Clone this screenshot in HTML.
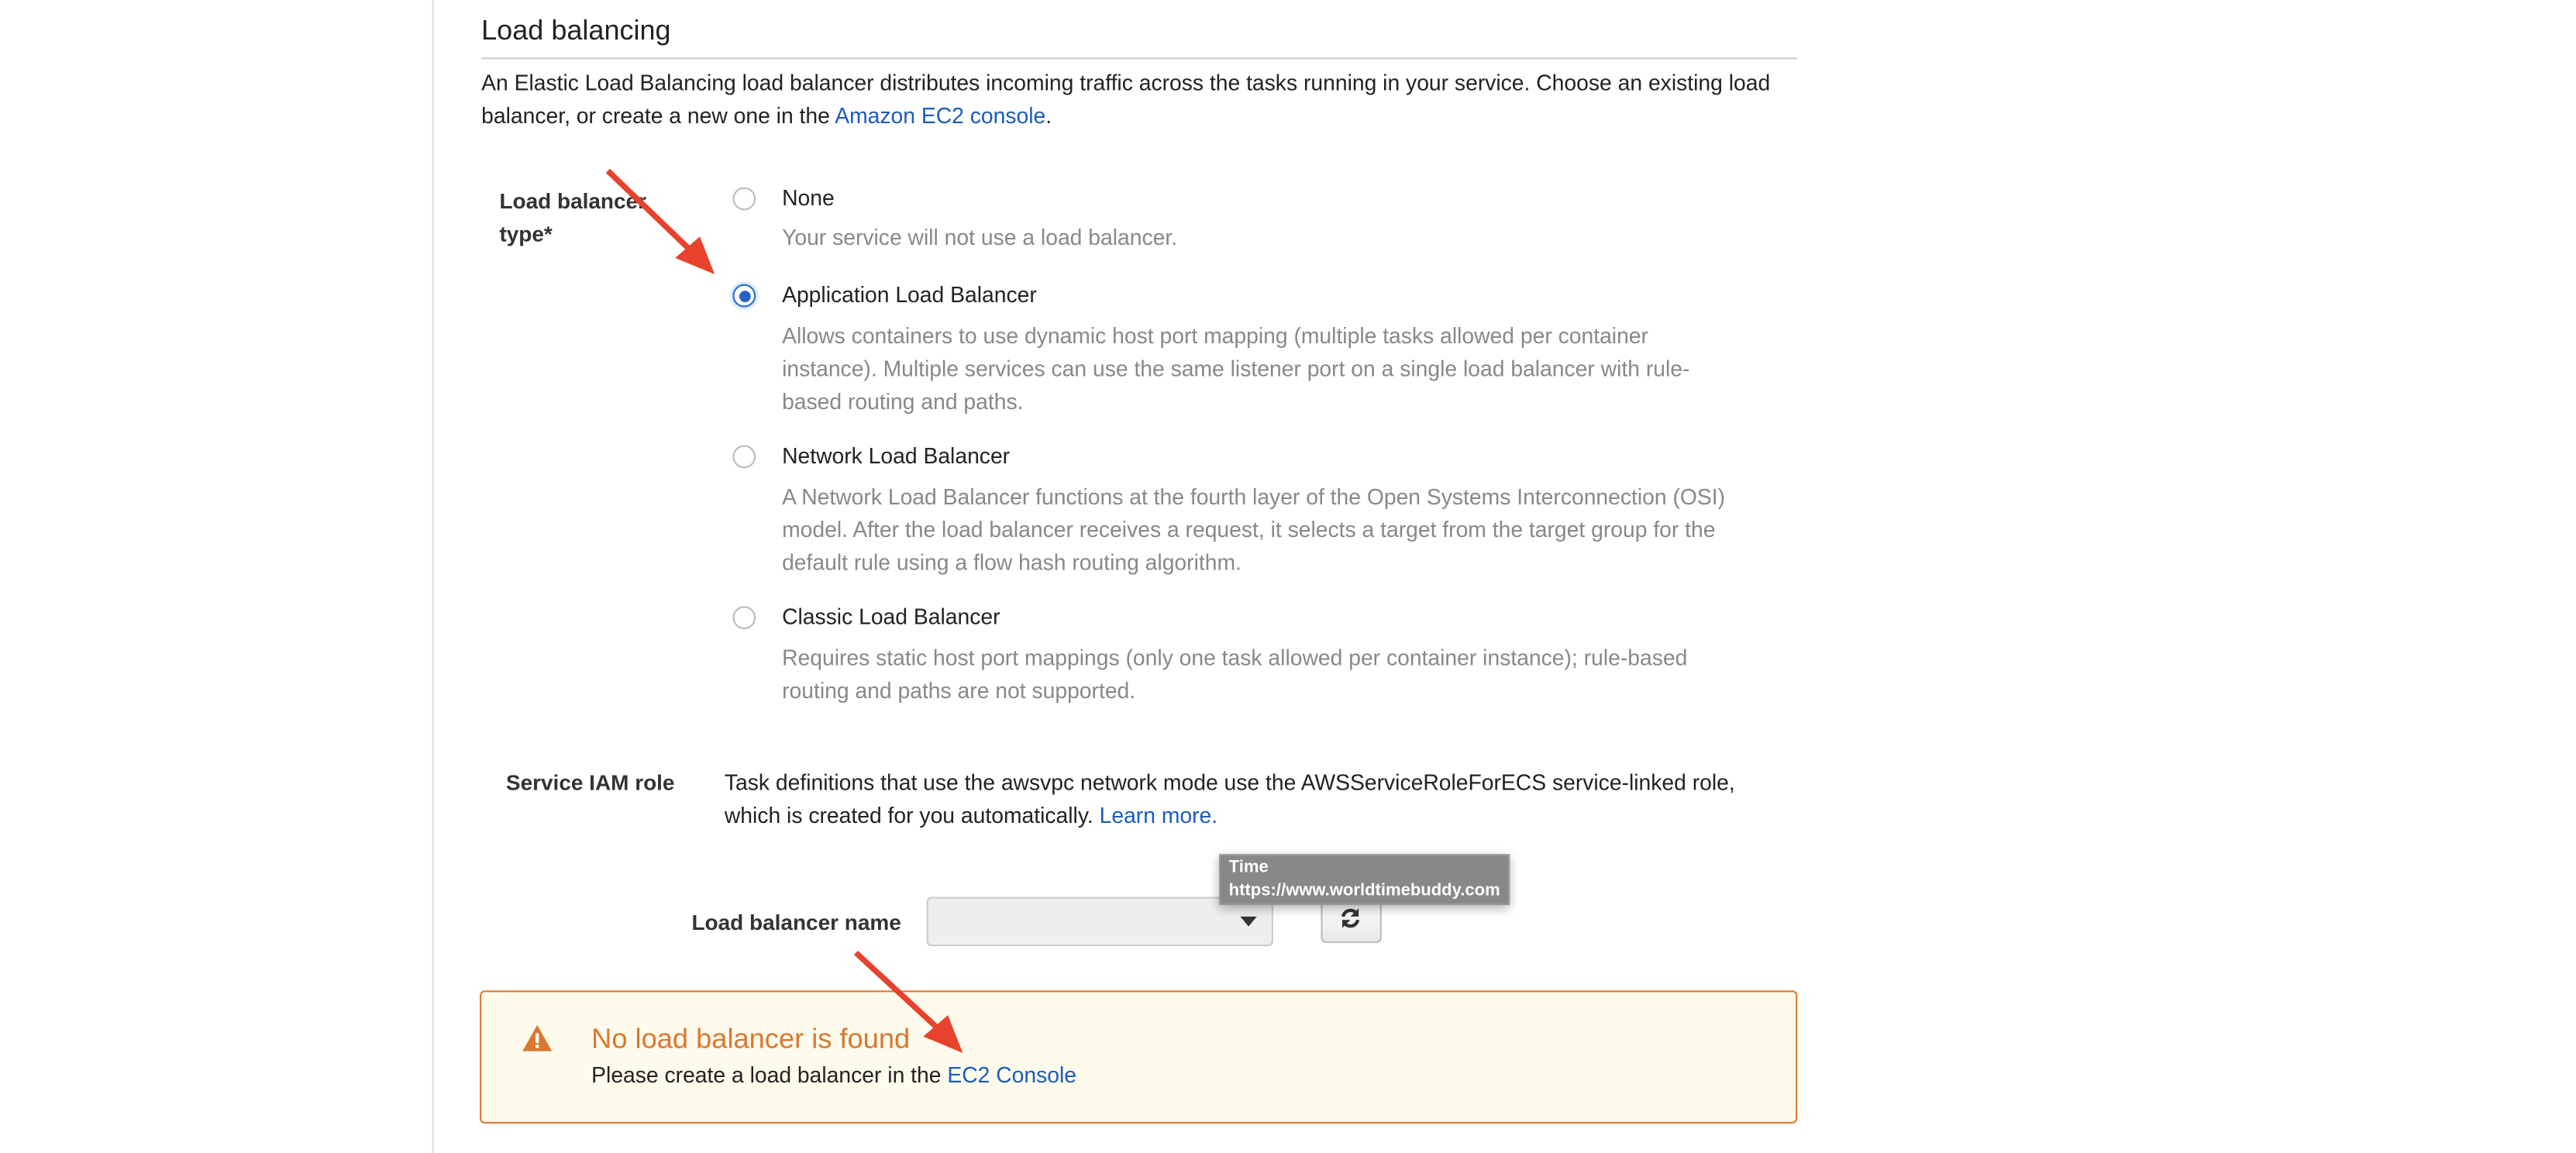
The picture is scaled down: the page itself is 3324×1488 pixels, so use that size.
<!DOCTYPE html>
<html><head><meta charset="utf-8"><style>
html,body{margin:0;padding:0;background:#fff;width:3324px;height:1488px;overflow:hidden}
#c{position:absolute;left:0;top:0;width:1568px;height:702px;transform:scale(2.1199);transform-origin:0 0;font-family:"Liberation Sans",Arial,sans-serif;color:#222;font-size:13.35px}
.a{position:absolute;white-space:nowrap}
.g{color:#888}
.b{font-weight:bold;color:#333;font-size:13.2px}
a{color:#1a5bbf;text-decoration:none}
.r{position:absolute;width:14px;height:14px;border:1px solid #bbb;border-radius:50%;background:#fff;box-sizing:border-box}
</style></head><body><div id="c">
<div style="position:absolute;left:263px;top:0;width:1px;height:702px;background:#ddd"></div>
<div class="a" style="left:293px;top:9px;font-size:17px;color:#222">Load balancing</div>
<div style="position:absolute;left:293px;top:35px;width:801px;height:1px;background:#ccc"></div>
<div class="a" style="left:293px;top:41px;line-height:20px">An Elastic Load Balancing load balancer distributes incoming traffic across the tasks running in your service. Choose an existing load<br>balancer, or create a new one in the <a>Amazon EC2 console</a>.</div>
<div class="a b" style="left:304px;top:113px;line-height:20px">Load balancer<br>type*</div>
<div class="r" style="left:446px;top:114px"></div>
<div class="a" style="left:476px;top:113px">None</div>
<div class="a g" style="left:476px;top:137px">Your service will not use a load balancer.</div>
<div class="r" style="left:446px;top:173px;border:1px solid #2a6fd4;box-shadow:0 0 3px #7aaef0"><div style="position:absolute;left:2.5px;top:2.5px;width:7px;height:7px;border-radius:50%;background:#2a62c0"></div></div>
<div class="a" style="left:476px;top:172px">Application Load Balancer</div>
<div class="a g" style="left:476px;top:195px;line-height:20px">Allows containers to use dynamic host port mapping (multiple tasks allowed per container<br>instance). Multiple services can use the same listener port on a single load balancer with rule-<br>based routing and paths.</div>
<div class="r" style="left:446px;top:271px"></div>
<div class="a" style="left:476px;top:270px">Network Load Balancer</div>
<div class="a g" style="left:476px;top:293px;line-height:20px">A Network Load Balancer functions at the fourth layer of the Open Systems Interconnection (OSI)<br>model. After the load balancer receives a request, it selects a target from the target group for the<br>default rule using a flow hash routing algorithm.</div>
<div class="r" style="left:446px;top:369px"></div>
<div class="a" style="left:476px;top:368px">Classic Load Balancer</div>
<div class="a g" style="left:476px;top:391px;line-height:20px">Requires static host port mappings (only one task allowed per container instance); rule-based<br>routing and paths are not supported.</div>
<div class="a b" style="left:308px;top:469px">Service IAM role</div>
<div class="a" style="left:441px;top:467px;line-height:20px">Task definitions that use the awsvpc network mode use the AWSServiceRoleForECS service-linked role,<br>which is created for you automatically. <a>Learn more.</a></div>
<div class="a b" style="left:421px;top:554px">Load balancer name</div>
<div style="position:absolute;left:564px;top:546px;width:211px;height:30px;box-sizing:border-box;border:1px solid #ccc;border-radius:3px;background:#eee"></div>
<div style="position:absolute;left:755px;top:558px;width:0;height:0;border-left:5px solid transparent;border-right:5px solid transparent;border-top:6px solid #333"></div>
<div style="position:absolute;left:804px;top:546px;width:37px;height:28px;box-sizing:border-box;border:1px solid #bbb;border-radius:3px;background:linear-gradient(#fff,#e8e8e8)"></div>
<svg style="position:absolute;left:815px;top:552px" width="14" height="14" viewBox="0 0 14 14"><path d="M2.5 6A4.6 4.6 0 0 1 11 4.5M11.5 8A4.6 4.6 0 0 1 3 9.5" stroke="#333" stroke-width="2" fill="none"/><path d="M12 1v5h-5z M2 13V8h5z" fill="#333"/></svg>
<div style="position:absolute;left:742px;top:520px;width:177px;height:31px;background:#888;box-shadow:0 2px 6px rgba(0,0,0,.3);border:1px solid #999;box-sizing:border-box"></div>
<div class="a" style="left:748px;top:522px;color:#fff;font-size:10.4px;font-weight:bold;line-height:14px">Time<br>https://www.worldtimebuddy.com</div>
<div style="position:absolute;left:292px;top:603px;width:802px;height:81px;box-sizing:border-box;border:1px solid #e07b2f;border-radius:3px;background:#fefaec"></div>
<svg style="position:absolute;left:318px;top:624px" width="18" height="16" viewBox="0 0 18 16"><path d="M9 0L18 16H0z" fill="#d9782e"/><rect x="8" y="5" width="2" height="6" fill="#fff"/><rect x="8" y="12" width="2" height="2" fill="#fff"/></svg>
<div class="a" style="left:360px;top:623px;font-size:17.1px;color:#d9782e">No load balancer is found</div>
<div class="a" style="left:360px;top:647px">Please create a load balancer in the <a>EC2 Console</a></div>
<svg style="position:absolute;left:0;top:0" width="1568" height="702"><g stroke="#e8412c" stroke-width="3.5" fill="#e8412c"><line x1="370" y1="104" x2="422" y2="154"/><path d="M435 167L411 157L426 144z" stroke="none"/><line x1="521" y1="580" x2="573" y2="628"/><path d="M586 641L562 631L577 618z" stroke="none"/></g></svg>
</div></body></html>
